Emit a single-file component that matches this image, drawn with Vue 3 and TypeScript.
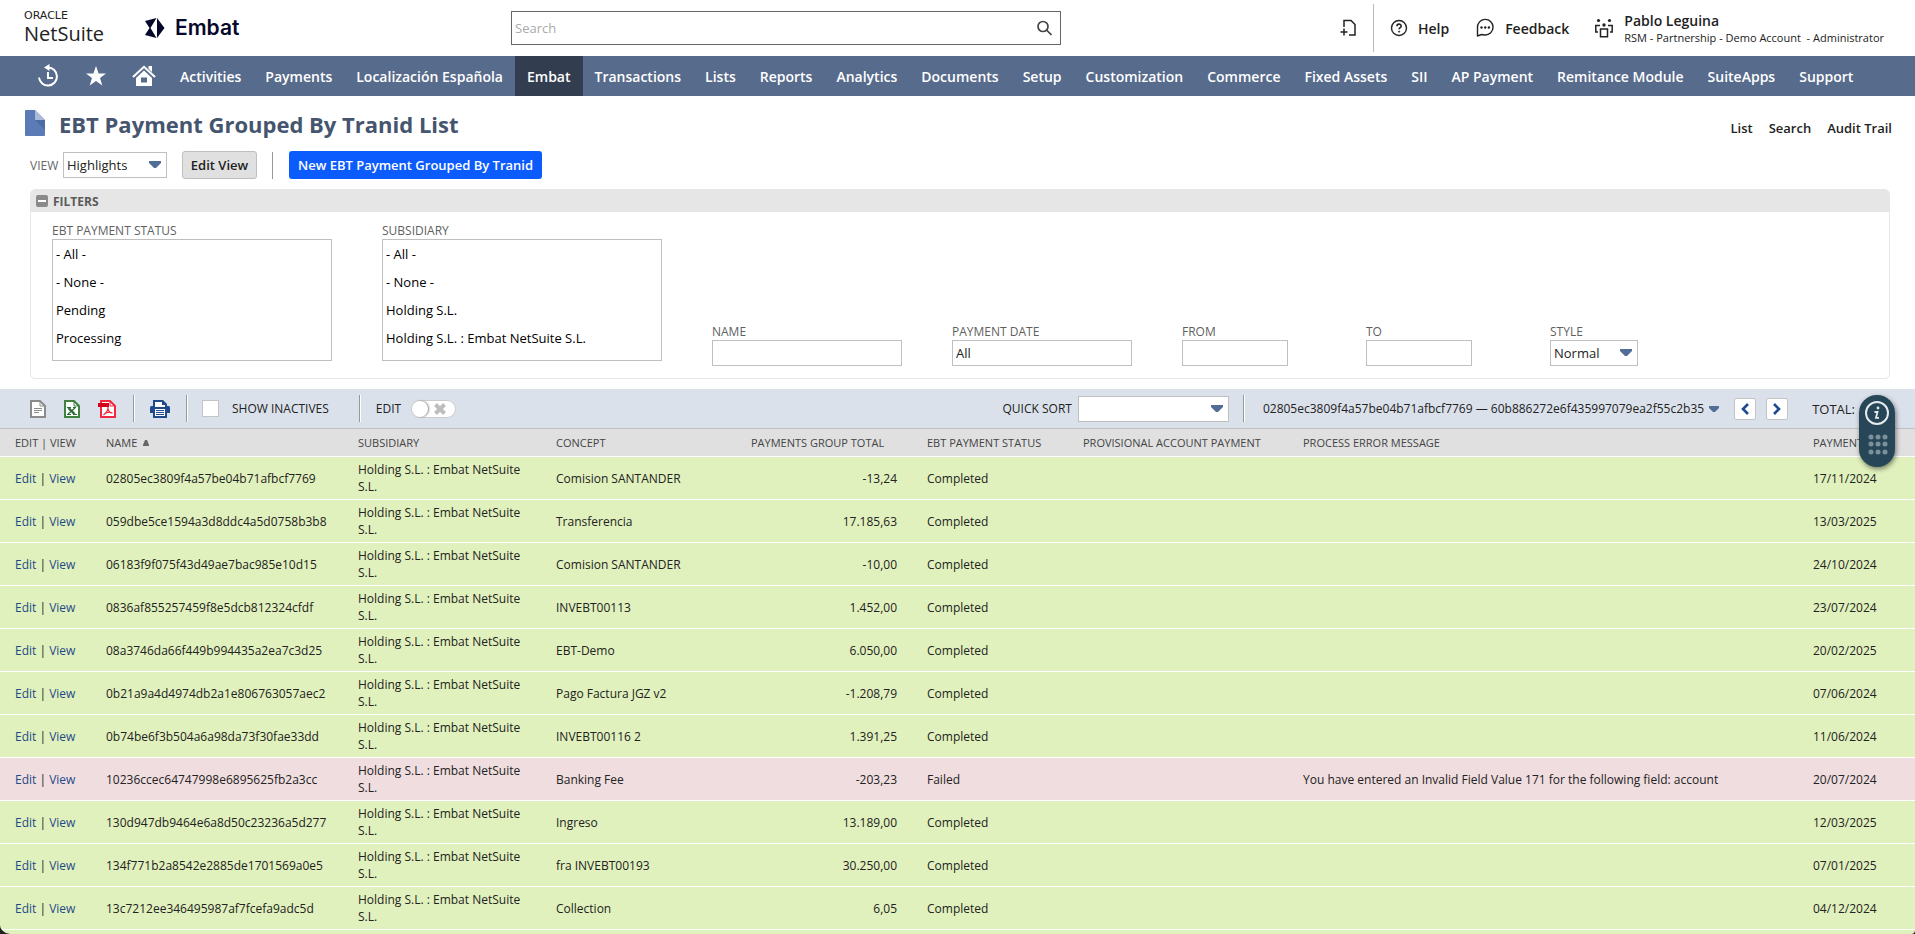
<script setup lang="ts">
import { ref } from 'vue'

interface PaymentRow {
  name: string
  concept: string
  total: string
  status: string
  error?: string
  date: string
}

const tabs: string[] = [
  'Activities', 'Payments', 'Localización Española', 'Embat', 'Transactions', 'Lists', 'Reports',
  'Analytics', 'Documents', 'Setup', 'Customization', 'Commerce', 'Fixed Assets', 'SII',
  'AP Payment', 'Remitance Module', 'SuiteApps', 'Support',
]
const activeTab = ref('Embat')

const statusOptions: string[] = ['- All -', '- None -', 'Pending', 'Processing']
const subsidiaryOptions: string[] = ['- All -', '- None -', 'Holding S.L.', 'Holding S.L. : Embat NetSuite S.L.']

const search = ref('')
const nameFilter = ref('')
const paymentDate = ref('All')
const dateFrom = ref('')
const dateTo = ref('')
const showInactives = ref(false)
const inlineEdit = ref(false)
const filtersOpen = ref(true)

const subsidiary = 'Holding S.L. : Embat NetSuite S.L.'

const rows: PaymentRow[] = [
  { name: '02805ec3809f4a57be04b71afbcf7769', concept: 'Comision SANTANDER', total: '-13,24', status: 'Completed', date: '17/11/2024' },
  { name: '059dbe5ce1594a3d8ddc4a5d0758b3b8', concept: 'Transferencia', total: '17.185,63', status: 'Completed', date: '13/03/2025' },
  { name: '06183f9f075f43d49ae7bac985e10d15', concept: 'Comision SANTANDER', total: '-10,00', status: 'Completed', date: '24/10/2024' },
  { name: '0836af855257459f8e5dcb812324cfdf', concept: 'INVEBT00113', total: '1.452,00', status: 'Completed', date: '23/07/2024' },
  { name: '08a3746da66f449b994435a2ea7c3d25', concept: 'EBT-Demo', total: '6.050,00', status: 'Completed', date: '20/02/2025' },
  { name: '0b21a9a4d4974db2a1e806763057aec2', concept: 'Pago Factura JGZ v2', total: '-1.208,79', status: 'Completed', date: '07/06/2024' },
  { name: '0b74be6f3b504a6a98da73f30fae33dd', concept: 'INVEBT00116 2', total: '1.391,25', status: 'Completed', date: '11/06/2024' },
  { name: '10236ccec64747998e6895625fb2a3cc', concept: 'Banking Fee', total: '-203,23', status: 'Failed', error: 'You have entered an Invalid Field Value 171 for the following field: account', date: '20/07/2024' },
  { name: '130d947db9464e6a8d50c23236a5d277', concept: 'Ingreso', total: '13.189,00', status: 'Completed', date: '12/03/2025' },
  { name: '134f771b2a8542e2885de1701569a0e5', concept: 'fra INVEBT00193', total: '30.250,00', status: 'Completed', date: '07/01/2025' },
  { name: '13c7212ee346495987af7fcefa9adc5d', concept: 'Collection', total: '6,05', status: 'Completed', date: '04/12/2024' },
]
</script>

<template>
  <div class="page">
    <header class="top">
      <div class="brand">
        <a href="#" class="netsuite"><span class="oracle">ORACLE</span><span class="suite">NetSuite</span></a>
        <a href="#" class="embat">
          <svg width="20" height="20" viewBox="0 0 20 20" aria-hidden="true">
            <path fill="#06082b" d="M12 0v20l7.500-10z" />
            <path fill="#06082b" d="M0 3l11.500-3L5.500 10l6 10L0 17l4.500-7z" />
          </svg>
          <span>Embat</span>
        </a>
      </div>
      <form class="search" role="search" @submit.prevent>
        <input v-model="search" type="text" placeholder="Search" aria-label="Search" />
        <button type="submit" aria-label="Submit search">
          <svg width="16" height="16" viewBox="0 0 16 16" fill="none" stroke="#444" stroke-width="1.700">
            <circle cx="7" cy="6.500" r="5" /><path d="M10.500 10l5 5" />
          </svg>
        </button>
      </form>
      <div class="tools">
        <button class="tool create" type="button" aria-label="Create new">
          <svg width="18" height="18" viewBox="0 0 18 18" fill="none" stroke="#222" stroke-width="1.500">
            <path d="M5 8V1.500h7l4 4V16H10M5 9.500v7M1.500 13h7" />
          </svg>
        </button>
        <span class="bar"></span>
        <button class="tool help" type="button">
          <svg width="18" height="18" viewBox="0 0 18 18" fill="none" stroke="#222" stroke-width="1.400">
            <circle cx="9" cy="9" r="7.500" />
            <path d="M6.900 7.200c0-2.800 4.300-2.700 4.300-.2 0 1.700-2.100 1.500-2.100 3.300" stroke-width="1.600" />
            <circle cx="9.100" cy="12.600" r=".7" fill="#222" stroke-width=".6" />
          </svg>
          <span>Help</span>
        </button>
        <button class="tool feedback" type="button">
          <svg width="20" height="20" viewBox="0 0 20 20" fill="none" stroke="#222" stroke-width="1.400">
            <path d="M2.500 18V10A7.800 7.800 0 1 1 10 17c-1.500 0-2.500-.5-3.500-.5z" stroke-linejoin="round" />
            <g fill="#222" stroke="none"><circle cx="6.500" cy="9.500" r="1.200" /><circle cx="10.200" cy="9.500" r="1.200" /><circle cx="13.900" cy="9.500" r="1.200" /></g>
          </svg>
          <span>Feedback</span>
        </button>
        <button class="tool user" type="button">
          <svg width="20" height="20" viewBox="0 0 20 20" fill="none" stroke="#222" stroke-width="1.500">
            <path d="M4 14H1.800V7.500H6M16 14h2.200V7.500H14M6.500 18.700V11h7v7.700z" />
            <g fill="#222" stroke="none"><circle cx="4.500" cy="2.500" r="1.600" /><circle cx="15.500" cy="2.500" r="1.600" /><circle cx="10" cy="7" r="1.700" /></g>
          </svg>
          <span class="who"><span class="person">Pablo Leguina</span><span class="role">RSM - Partnership - Demo Account&nbsp; - Administrator</span></span>
        </button>
      </div>
    </header>

    <nav class="menu">
      <button class="glyph" type="button" aria-label="Recent records">
        <svg width="24" height="24" viewBox="0 0 24 24" fill="none" stroke="#fff" stroke-width="2">
          <path d="M12 3.500A9 9 0 1 1 3 13.500" /><path d="M12 8v6h5" /><path d="M13.500 0v7L8 3.500z" fill="#fff" stroke="none" />
        </svg>
      </button>
      <button class="glyph" type="button" aria-label="Shortcuts">
        <svg width="22" height="22" viewBox="0 0 22 22" fill="#fff"><path d="M11 1l2.600 7.400H21l-6 4.600 2.300 7.500L11 16l-6.300 4.500L7 13 1 8.400h7.400z" /></svg>
      </button>
      <button class="glyph" type="button" aria-label="Home">
        <svg width="24" height="22" viewBox="0 0 24 22">
          <path fill="none" stroke="#fff" stroke-width="2" d="M1 12L12 1.800 23 12" />
          <path fill="#fff" d="M16.500 1H20v6l-3.500-3.300zM12 5.500l8 7.500v8H4v-8zM9 12.500v5h6v-5z" fill-rule="evenodd" />
        </svg>
      </button>
      <a v-for="tab in tabs" :key="tab" href="#" :class="{ active: tab === activeTab }" @click.prevent="activeTab = tab">{{ tab }}</a>
    </nav>

    <section class="heading">
      <svg width="20" height="26" viewBox="0 0 20 26" aria-hidden="true">
        <path fill="#5b7bb6" d="M1 0h9l10 10v15a1 1 0 0 1-1 1H1a1 1 0 0 1-1-1V1a1 1 0 0 1 1-1z" />
        <path fill="#a9badb" d="M10 0l10 10H10z" /><path fill="#4c6ba5" d="M10 10h10v10z" />
      </svg>
      <div class="title">
        <h1>EBT Payment Grouped By Tranid List</h1>
        <div class="links"><a href="#">List</a><a href="#">Search</a><a href="#">Audit Trail</a></div>
      </div>
    </section>

    <section class="actions">
      <label for="view" class="caption">VIEW</label>
      <span class="drop view">
        <select id="view"><option>Highlights</option></select>
        <svg width="12" height="8" viewBox="0 0 12 8"><path fill="#526e96" d="M0 0h12v2L7 7H5L0 2z" /></svg>
      </span>
      <button type="button" class="btn plain">Edit View</button>
      <span class="rule"></span>
      <button type="button" class="btn primary">New EBT Payment Grouped By Tranid</button>
    </section>

    <section class="filters">
      <h2>
        <button type="button" aria-label="Toggle filters" @click="filtersOpen = !filtersOpen"><span></span></button>
        FILTERS
      </h2>
      <div v-show="filtersOpen" class="fields">
        <div class="field list">
          <label for="status">EBT PAYMENT STATUS</label>
          <select id="status" multiple size="4"><option v-for="o in statusOptions" :key="o">{{ o }}</option></select>
        </div>
        <div class="field list">
          <label for="subsidiary">SUBSIDIARY</label>
          <select id="subsidiary" multiple size="4"><option v-for="o in subsidiaryOptions" :key="o">{{ o }}</option></select>
        </div>
        <div class="field name"><label for="name">NAME</label><input id="name" v-model="nameFilter" type="text" /></div>
        <div class="field pay"><label for="paydate">PAYMENT DATE</label><input id="paydate" v-model="paymentDate" type="text" /></div>
        <div class="field date"><label for="from">FROM</label><input id="from" v-model="dateFrom" type="text" /></div>
        <div class="field date"><label for="to">TO</label><input id="to" v-model="dateTo" type="text" /></div>
        <div class="field">
          <label for="style">STYLE</label>
          <span class="drop style">
            <select id="style"><option>Normal</option></select>
            <svg width="12" height="8" viewBox="0 0 12 8"><path fill="#526e96" d="M0 0h12v2L7 7H5L0 2z" /></svg>
          </span>
        </div>
      </div>
    </section>

    <section class="bar-tools">
      <div class="exports">
        <button type="button" aria-label="Export CSV">
          <svg width="16" height="18" viewBox="0 0 16 18" fill="none" stroke="#8b8b8b">
            <path fill="#fff" stroke-width="2" d="M1 1h9l5 5v11H1z" /><path d="M10 1v5h5M4 8.500h8M4 10.500h8M4 12.500h5" />
          </svg>
        </button>
        <button type="button" aria-label="Export Excel">
          <svg width="16" height="18" viewBox="0 0 16 18" fill="none" stroke="#40813f">
            <path fill="#fff" stroke-width="2" d="M1 1h9l5 5v11H1z" /><path d="M10 1v5h5" />
            <path stroke="#2b6b35" stroke-width="2.400" d="M4.500 8l6 6" /><path stroke="#2b6b35" stroke-width="1.200" d="M11 8l-7 6M3 14.500h4M9 14.500h4M3 7.500h4M9 7.500h3" />
          </svg>
        </button>
        <button type="button" aria-label="Export PDF">
          <svg width="18" height="18" viewBox="0 0 18 18" fill="none" stroke="#f2293e">
            <path fill="#fff" stroke-width="2" d="M3 1h9l5 5v11H3z" /><path d="M12 1v5h5" />
            <path stroke-width="1.200" d="M10 7c.5 4-2 6-4.500 8 2-2.500 6-3.500 9-2-2.500 0-4-2-4.500-4" />
            <path fill="#d5001c" stroke="none" d="M0 3h11v4H0z" />
          </svg>
        </button>
      </div>
      <span class="rule"></span>
      <button type="button" class="print" aria-label="Print">
        <svg width="20" height="18" viewBox="0 0 20 18">
          <path fill="#1f4b8e" d="M3 0h10l4 4v2h1.500A1.500 1.500 0 0 1 20 7.500V13h-3v5H3v-5H0V7.500A1.500 1.500 0 0 1 1.500 6H3z" />
          <path fill="#fff" d="M5 2h7v3h3v2H5zM5 9h10v7H5z" /><path stroke="#1f4b8e" d="M6 10.500h8M6 12.500h8M6 14.500h8" />
        </svg>
      </button>
      <span class="rule"></span>
      <label class="inactive"><input v-model="showInactives" type="checkbox" /><span>SHOW INACTIVES</span></label>
      <span class="rule"></span>
      <label class="edit">
        <span>EDIT</span>
        <input v-model="inlineEdit" type="checkbox" />
        <span class="toggle">
          <span class="knob"></span>
          <svg width="12" height="12" viewBox="0 0 12 12"><path stroke="#bdbdbd" stroke-width="4" d="M1.500 1.500l9 9M10.500 1.500l-9 9" /></svg>
        </span>
      </label>
      <div class="paging">
        <label for="sort">QUICK SORT</label>
        <span class="drop sort">
          <select id="sort"><option></option></select>
          <svg width="12" height="8" viewBox="0 0 12 8"><path fill="#526e96" d="M0 0h12v2L7 7H5L0 2z" /></svg>
        </span>
        <span class="rule"></span>
        <button type="button" class="range">
          02805ec3809f4a57be04b71afbcf7769 — 60b886272e6f435997079ea2f55c2b35
          <svg width="10" height="6" viewBox="0 0 10 6"><path fill="#526e96" d="M0 0h10v2L6 6H4L0 2z" /></svg>
        </button>
        <button type="button" class="step" aria-label="Previous page"><svg width="8" height="12" viewBox="0 0 8 12"><path fill="none" stroke="#1f4b8e" stroke-width="2.600" d="M7 1L2 6l5 5" /></svg></button>
        <button type="button" class="step" aria-label="Next page"><svg width="8" height="12" viewBox="0 0 8 12"><path fill="none" stroke="#1f4b8e" stroke-width="2.600" d="M1 1l5 5-5 5" /></svg></button>
        <span class="total">TOTAL:</span>
      </div>
      <div class="widget">
        <svg width="36" height="72" viewBox="0 0 36 72" aria-hidden="true">
          <circle cx="18" cy="18" r="11" fill="none" stroke="#e4eaed" stroke-width="2" />
          <circle cx="19" cy="13" r="1.400" fill="#e4eaed" />
          <path fill="none" stroke="#e4eaed" stroke-width="1.800" d="M15.500 17h3l-1.500 5.800h3" />
          <g fill="#7b919c">
            <circle cx="12" cy="42" r="2.500" /><circle cx="19" cy="42" r="2.500" /><circle cx="26" cy="42" r="2.500" />
            <circle cx="12" cy="49" r="2.500" /><circle cx="19" cy="49" r="2.500" /><circle cx="26" cy="49" r="2.500" />
            <circle cx="12" cy="57" r="2.500" /><circle cx="19" cy="57" r="2.500" /><circle cx="26" cy="57" r="2.500" />
          </g>
        </svg>
      </div>
    </section>

    <table class="records">
      <colgroup>
        <col class="c-edit" /><col class="c-name" /><col class="c-sub" /><col class="c-concept" /><col class="c-total" />
        <col class="c-status" /><col class="c-account" /><col /><col class="c-date" />
      </colgroup>
      <thead>
        <tr>
          <th>EDIT | VIEW</th>
          <th>NAME <svg width="6" height="6" viewBox="0 0 6 6"><path fill="#666" d="M2 0h2l2 5v1H0V5z" /></svg></th>
          <th>SUBSIDIARY</th><th>CONCEPT</th><th class="sum">PAYMENTS GROUP TOTAL</th><th>EBT PAYMENT STATUS</th>
          <th>PROVISIONAL ACCOUNT PAYMENT</th><th>PROCESS ERROR MESSAGE</th><th>PAYMENT</th>
        </tr>
      </thead>
      <tbody>
        <tr v-for="row in rows" :key="row.name" :class="{ failed: row.status === 'Failed' }">
          <td><a href="#">Edit</a> | <a href="#">View</a></td>
          <td>{{ row.name }}</td>
          <td class="wrap">{{ subsidiary }}</td>
          <td>{{ row.concept }}</td>
          <td class="amount">{{ row.total }}</td>
          <td>{{ row.status }}</td>
          <td></td>
          <td>{{ row.error }}</td>
          <td>{{ row.date }}</td>
        </tr>
      </tbody>
    </table>
  </div>
</template>

<style>
body {
  margin: 0;
  background: #222;
}
</style>

<style scoped>
.page {
  box-sizing: border-box;
  height: 100vh;
  overflow: hidden;
  background: linear-gradient(#fff 50%, #e1f1bd 50%);
  border-radius: 0 0 4px 10px;
  color: #222;
  font-family: "Open Sans", "Noto Sans", sans-serif;
  font-size: 12px;
}
.page *, .page *::before { box-sizing: border-box; }
button, input, select { font: inherit; color: inherit; margin: 0; border-radius: 0; }
button { padding: 0; border: 0; background: none; cursor: pointer; }
a { color: inherit; text-decoration: none; }
svg { display: block; flex: none; }

.top { display: flex; align-items: center; height: 56px; background: #fff; }
.brand { display: flex; align-items: center; width: 511px; padding-left: 24px; }
.netsuite { display: flex; flex-direction: column; width: 121px; color: #222; }
.oracle { font: 400 11px/12px "DejaVu Sans", sans-serif; }
.suite { font-size: 20px; line-height: 24px; }
.embat { display: flex; align-items: center; gap: 10px; color: #06082b; font: 600 21px/28px Inter, sans-serif; }
.search { display: flex; width: 550px; height: 34px; border: 1px solid #666; background: #fff; }
.search input { flex: 1; min-width: 0; padding: 0 3px; border: 0; outline: 0; background: none; font-size: 13px; }
.search input::placeholder { color: #aaa; }
.search button { display: grid; place-items: center; width: 32px; }
.tools { display: flex; align-items: center; height: 48px; margin-left: auto; padding-right: 31px; }
.tool { display: flex; align-items: center; gap: 10px; font-size: 14px; font-weight: 600; white-space: nowrap; }
.bar { width: 1px; height: 48px; margin: 0 16px; background: #bbb; }
.help { margin-right: 26px; }
.feedback { margin-right: 25px; }
.who { display: flex; flex-direction: column; text-align: left; }
.person { font-size: 14px; line-height: 19px; }
.role { font-size: 11px; line-height: 16px; font-weight: 400; }

.menu { display: flex; height: 40px; padding-left: 24px; background: #576b8c; }
.menu a { padding: 0 12px; color: #fff; font-size: 14px; font-weight: 600; line-height: 41px; white-space: nowrap; }
.menu a.active { background: #333d50; }
.glyph { display: grid; place-items: center; width: 48px; }

.heading { display: flex; align-items: center; gap: 14px; height: 54px; padding: 2px 23px 0 25px; background: #fff; }
.heading > svg { align-self: flex-start; margin-top: 12px; }
.title { display: flex; flex: 1; align-items: baseline; justify-content: space-between; }
h1 { margin: 0; color: #45556f; font-size: 22px; line-height: 30px; font-weight: 700; }
.links { display: flex; gap: 16px; font-size: 13px; font-weight: 600; }

.actions { display: flex; align-items: center; height: 30px; padding-left: 30px; }
.caption { width: 33px; color: #666; }
.drop { position: relative; display: block; }
.drop select { display: block; width: 100%; height: 26px; padding: 0 3px; border: 1px solid #bfbfbf; outline: 0; background: #fff; appearance: none; font-size: 13px; }
.drop svg { position: absolute; top: 9px; right: 6px; pointer-events: none; }
.drop.view { width: 104px; }
.drop.style { width: 88px; }
.drop.sort { width: 151px; }
.rule { width: 2px; height: 27px; border-left: 1px solid #999; border-right: 1px solid #fff; }
.btn { height: 28px; border-radius: 3px; font-size: 13px; font-weight: 600; white-space: nowrap; }
.plain { width: 75px; margin-left: 15px; border: 1px solid #bfbfbf; background: #e0e0e0; }
.actions .rule { margin: 0 15px; }
.primary { padding: 0 9px; background: #0b5bfd; color: #fff; }

.filters { margin: 9px 25px 10px 30px; border: 1px solid #e6e6e6; border-radius: 5px; background: #fff; overflow: hidden; }
h2 { display: flex; align-items: center; gap: 5px; height: 22px; margin: 0; padding-left: 5px; background: #e6e6e6; color: #5a5a5a; font-size: 12px; font-weight: 700; }
h2 button { display: grid; place-items: center; width: 12px; height: 12px; border-radius: 2px; background: #8a8a8a; }
h2 button span { width: 8px; height: 2px; background: #fff; }
.fields { display: flex; align-items: flex-end; gap: 50px; padding: 10px 21px 12px; }
.field { display: flex; flex-direction: column; }
.field label { color: #5f5f5f; font-size: 12px; line-height: 17px; }
.field > input { height: 26px; padding: 0 3px; border: 1px solid #bfbfbf; outline: 0; font-size: 13px; }
.field.list { width: 280px; margin-bottom: 5px; }
.field.list select { height: 122px; padding: 0; border: 1px solid #bfbfbf; outline: 0; background: #fff; color: #000; overflow: hidden; font-size: 13px; }
.field.list option { height: 28px; padding: 5px 3px; line-height: 18px; }
.field.name { width: 190px; }
.field.pay { width: 180px; }
.field.date { width: 134px; }
.field.date input { width: 106px; }

.bar-tools { position: relative; display: flex; align-items: center; height: 39px; padding: 0 60px 0 30px; background: #dbe1eb; font-size: 12px; white-space: nowrap; }
.exports { display: flex; gap: 18px; margin-right: 17px; }
.print { margin: 0 16px 0 15px; }
.inactive, .edit { display: flex; align-items: center; }
.inactive { gap: 13px; margin: 0 30px 0 14px; }
.inactive input { appearance: none; width: 17px; height: 17px; border: 1px solid #c4c4c4; background: #fff; }
.edit { gap: 10px; margin-left: 15px; }
.edit input { position: absolute; opacity: 0; }
.toggle { display: flex; align-items: center; gap: 6px; width: 45px; height: 18px; border: 1px solid #ccc; border-radius: 9px; background: #fff; }
.knob { width: 16px; height: 16px; border-radius: 8px; background: #fff; box-shadow: 1px 0 2px #888; }
.paging { display: flex; align-items: center; margin-left: auto; }
.paging label { margin-right: 6px; }
.paging .rule { margin: 0 18px 0 14px; }
.range { display: flex; align-items: center; gap: 5px; margin-right: 15px; }
.step { display: grid; place-items: center; width: 22px; height: 22px; margin-right: 10px; border: 1px solid #c4c4c4; border-radius: 2px; background: #fff; }
.total { margin-left: 14px; font-size: 13px; }
.widget { position: absolute; top: 6px; right: 20px; z-index: 2; width: 36px; height: 72px; border-radius: 18px; background: #274657; box-shadow: 1px 2px 5px rgba(0, 0, 0, 0.5); }

.records { width: 100%; table-layout: fixed; border-collapse: separate; border-spacing: 0; }
.c-edit { width: 91px; }
.c-name { width: 252px; }
.c-sub { width: 198px; }
.c-concept { width: 195px; }
.c-total { width: 176px; }
.c-status { width: 156px; }
.c-account { width: 220px; }
.c-date { width: 117px; }
th, td { padding: 0 15px; text-align: left; white-space: nowrap; border-bottom: 1px solid #fff; }
th { height: 29px; border-top: 1px solid #c0c0c0; background: #e0e0e0; color: #444; font-size: 11px; font-weight: 400; }
th svg { display: inline-block; margin-left: 3px; vertical-align: 1px; }
th.sum { padding-right: 0; }
td { height: 43px; background: #e1f1bd; line-height: 17px; }
td.wrap { white-space: normal; }
td.amount { text-align: right; }
.failed td { background: #f0dddf; }
td a { color: #1f4a87; }
</style>
